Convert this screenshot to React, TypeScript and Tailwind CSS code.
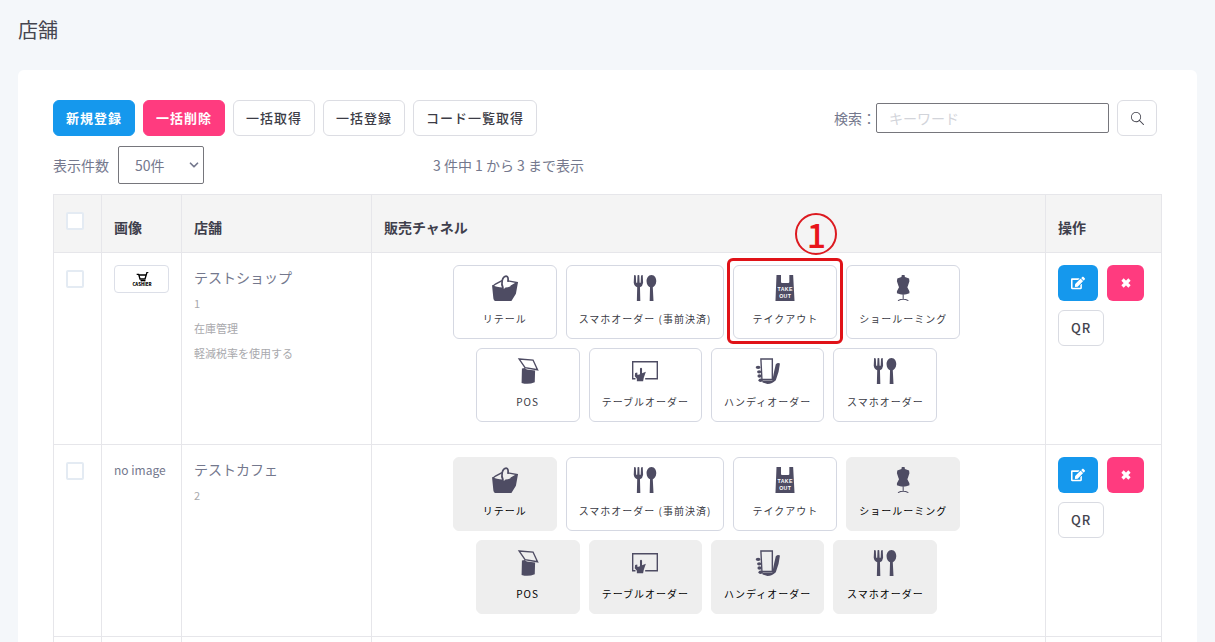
import type { ReactNode } from "react";
import { ChevronDown } from "lucide-react";
import { SlMagnifier } from "react-icons/sl";
import { FaEdit } from "react-icons/fa";

type ChannelIcon =
  | "basket"
  | "cutlery"
  | "bag"
  | "mannequin"
  | "pos"
  | "table"
  | "handy";

interface Channel {
  label: string;
  icon: ChannelIcon;
}

interface Store {
  id: number;
  name: string;
  notes: string[];
  hasLogo: boolean;
  enabled: string[];
  highlighted?: string;
}

const CHANNEL_ROWS: Channel[][] = [
  [
    { label: "リテール", icon: "basket" },
    { label: "スマホオーダー (事前決済)", icon: "cutlery" },
    { label: "テイクアウト", icon: "bag" },
    { label: "ショールーミング", icon: "mannequin" },
  ],
  [
    { label: "POS", icon: "pos" },
    { label: "テーブルオーダー", icon: "table" },
    { label: "ハンディオーダー", icon: "handy" },
    { label: "スマホオーダー", icon: "cutlery" },
  ],
];

const STORES: Store[] = [
  {
    id: 1,
    name: "テストショップ",
    notes: ["在庫管理", "軽減税率を使用する"],
    hasLogo: true,
    enabled: CHANNEL_ROWS.flat().map((c) => c.label),
    highlighted: "テイクアウト",
  },
  {
    id: 2,
    name: "テストカフェ",
    notes: [],
    hasLogo: false,
    enabled: ["スマホオーダー (事前決済)", "テイクアウト"],
  },
];

const ICONS: Record<ChannelIcon, ReactNode> = {
  basket: (
    <>
      <path
        d="M3 32 L10 26 L29 16 M46 17 L72 22 L54 33"
        fill="none"
        stroke="currentColor"
        strokeWidth="4"
      />
      <path
        d="M32 38 C25 26 29 4 41 3 C47 3 47 12 46 20"
        fill="none"
        stroke="currentColor"
        strokeWidth="5"
      />
      <path d="M0 29 C8 34 20 36 31 36 L35 40 L39 36 C46 36 52 34 57 30 L75 21 L69 54 L56 75 L9 75 Q5 74 4 68 Z" />
    </>
  ),
  cutlery: (
    <>
      <path d="M6 1 Q9 -1 11 2 L12 22 Q14 23 15 22 L16 1 Q19 -1 21 1 L22 22 Q24 23 25 22 L26 2 Q29 -1 31 1 L32 22 Q31 32 23 35 L24 75 L14 75 L15 35 Q6 32 5 22 Z" />
      <path d="M56 0 C66 0 70 9 70 18 C70 28 64 33 60 35 L62 75 L51 75 L52 35 C47 33 42 28 42 18 C42 9 47 0 56 0 Z" />
    </>
  ),
  bag: (
    <>
      <path d="M13 0 L26 0 L26 20 Q26 23 29 23 L47 23 Q50 23 50 20 L50 0 L61 0 L65 75 L10 75 Z" />
      <g
        className="font-['Liberation_Sans',sans-serif] font-bold"
        fill="white"
        fontSize="15"
        textAnchor="middle"
      >
        <text x="38" y="47">
          TAKE
        </text>
        <text x="38" y="66">
          OUT
        </text>
      </g>
    </>
  ),
  mannequin: (
    <>
      <path d="M34 0 L42 0 L43 6 L55 10 L56 18 L52 30 L50 35 L56 47 L56 53 Q38 61 20 53 L20 47 L26 35 L24 30 L20 18 L21 10 L33 6 Z" />
      <path
        d="M38 56 L38 69 M23 74 Q38 66 53 74"
        fill="none"
        stroke="currentColor"
        strokeWidth="3"
      />
    </>
  ),
  pos: (
    <>
      <path
        d="M12 3 L52 6 L65 34 L29 28 Z"
        fill="none"
        stroke="currentColor"
        strokeWidth="4"
      />
      <path d="M20 30 L28 29 L34 33 L58 36 L57 70 Q38 78 19 72 Z" />
    </>
  ),
  table: (
    <>
      <path
        d="M10 60 L2 60 L2 11 L73 11 L73 60 L38 60"
        fill="none"
        stroke="currentColor"
        strokeWidth="4"
      />
      <path d="M23 30 Q26 26 29 30 L29 44 L40 40 L34 57 L32 67 L14 67 L14 60 L8 53 L9 43 L15 42 L16 49 L23 47 Z" />
    </>
  ),
  handy: (
    <>
      <path
        d="M17 3 L50 3 L50 62 L20 62 Z"
        fill="none"
        stroke="currentColor"
        strokeWidth="4"
      />
      <ellipse cx="9" cy="27" rx="7" ry="5" />
      <ellipse cx="12" cy="40" rx="6" ry="5" />
      <ellipse cx="13" cy="52" rx="6" ry="5" />
      <ellipse cx="16" cy="64" rx="6" ry="5" />
      <path d="M60 18 Q66 12 72 16 L68 40 L60 64 Q50 74 36 75 L22 71 L20 65 L50 65 L55 40 Z" />
    </>
  ),
};

function ChannelButton({
  channel,
  enabled,
  highlighted,
}: {
  channel: Channel;
  enabled: boolean;
  highlighted: boolean;
}) {
  return (
    <div className="relative mr-1">
      <button
        type="button"
        className={
          enabled
            ? "flex h-[74px] min-w-[104px] flex-col items-center rounded-md border border-[#d5d8e2] bg-white px-3 pt-[9px] text-[10px] tracking-[1px] text-[#3a3a44]"
            : "flex h-[74px] min-w-[104px] flex-col items-center rounded-md border border-[#eeeeee] bg-[#eeeeee] px-3 pt-[9px] text-[10px] tracking-[1px] text-black"
        }
      >
        <svg
          viewBox="0 0 75 75"
          className="size-[26px] text-[#4e4c63]"
          fill="currentColor"
          aria-hidden="true"
        >
          {ICONS[channel.icon]}
        </svg>
        <span className="mt-2 whitespace-nowrap leading-5">
          {channel.label}
        </span>
      </button>
      {highlighted && (
        <>
          <div className="pointer-events-none absolute -inset-x-[6px] -top-[7px] -bottom-[5px] rounded-md border-3 border-[#e01218]" />
          <span className="pointer-events-none absolute -top-[52px] left-[62px] flex size-[42px] items-center justify-center rounded-full border-2 border-[#dc1a20] text-[34px] leading-none font-medium text-[#e8141a]">
            1
          </span>
        </>
      )}
    </div>
  );
}

function ShopLogo() {
  return (
    <div className="flex h-7 w-[55px] items-center justify-center rounded-sm border border-[#dcdfe8] bg-white">
      <svg viewBox="0 0 60 42" className="h-[14px] w-5" aria-hidden="true">
        <path
          d="M14 7 L20 7 L24 21 L39 21 L45 1 L49 0 M19 9 L42 9 M26 26 L40 26"
          fill="none"
          stroke="black"
          strokeWidth="4"
        />
        <circle cx="28" cy="26" r="2" />
        <circle cx="38" cy="26" r="2" />
        <text x="30" y="42" fontSize="13" fontWeight="900" textAnchor="middle">
          CASHIER
        </text>
      </svg>
    </div>
  );
}

function Checkbox({ label }: { label: string }) {
  return (
    <input
      type="checkbox"
      aria-label={label}
      className="block size-[18px] appearance-none rounded-xs border-2 border-[#e4ebf3] bg-white checked:bg-[#1598ed]"
    />
  );
}

function StoreRow({ store }: { store: Store }) {
  return (
    <tr className="align-top">
      <td className="border border-[#e6e6ea] px-3 pt-[17px]">
        <Checkbox label={store.name} />
      </td>
      <td className="border border-[#e6e6ea] px-3 pt-3 text-[12px] leading-[25px]">
        {store.hasLogo ? <ShopLogo /> : "no image"}
      </td>
      <td className="border border-[#e6e6ea] px-3 pt-3">
        <div className="mb-0.5 text-sm leading-6">{store.name}</div>
        <div className="text-[11px] leading-[25px] text-[#a9a9ad]">
          <div>{store.id}</div>
          {store.notes.map((note) => (
            <div key={note}>{note}</div>
          ))}
        </div>
      </td>
      <td className="border border-[#e6e6ea] px-3 pt-3 pb-[22px]">
        <div className="flex flex-col gap-[9px]">
          {CHANNEL_ROWS.map((row, i) => (
            <div key={i} className="flex justify-center gap-[5px]">
              {row.map((channel) => (
                <ChannelButton
                  key={channel.label}
                  channel={channel}
                  enabled={store.enabled.includes(channel.label)}
                  highlighted={store.highlighted === channel.label}
                />
              ))}
            </div>
          ))}
        </div>
      </td>
      <td className="border border-[#e6e6ea] px-3 pt-3">
        <div className="flex flex-wrap gap-[9px]">
          <button
            type="button"
            aria-label="編集"
            className="flex h-9 w-10 items-center justify-center rounded-md bg-[#1598ed] text-white"
          >
            <FaEdit size={14} />
          </button>
          <button
            type="button"
            aria-label="削除"
            className="flex h-9 w-[37px] items-center justify-center rounded-md bg-[#ff3b7f] text-white"
          >
            <svg viewBox="0 0 10 10" className="size-[10px]" aria-hidden="true">
              <path
                d="M1.5 1.5 L8.5 8.5 M8.5 1.5 L1.5 8.5"
                stroke="currentColor"
                strokeWidth="3.2"
              />
            </svg>
          </button>
          <button
            type="button"
            className="h-9 rounded-md border border-[#d9dbe2] bg-white px-3 text-[13px] font-medium tracking-[1px] text-[#44444e]"
          >
            QR
          </button>
        </div>
      </td>
    </tr>
  );
}

export default function App() {
  return (
    <div className="min-h-screen bg-[#f4f7fa] px-[18px] font-['Noto_Sans_CJK_JP',sans-serif] text-sm text-[#74788d]">
      <h1 className="pt-[15px] pb-[25px] text-[20px] leading-[30px] text-[#45454f]">
        店舗
      </h1>

      <main className="rounded-md bg-white px-[35px] pt-[30px] pb-8">
        {/* Toolbar */}
        <div className="flex items-center justify-between pr-[5px]">
          <div className="flex gap-2 text-[13px] tracking-[1px]">
            <button
              type="button"
              className="h-9 rounded-md border border-[#1598ed] bg-[#1598ed] px-3 font-bold text-white"
            >
              新規登録
            </button>
            <button
              type="button"
              className="h-9 rounded-md border border-[#ff3b7f] bg-[#ff3b7f] px-3 font-bold text-white"
            >
              一括削除
            </button>
            {["一括取得", "一括登録", "コード一覧取得"].map((label) => (
              <button
                key={label}
                type="button"
                className="h-9 rounded-md border border-[#dcdde3] bg-white px-3 font-medium text-[#3c3c46]"
              >
                {label}
              </button>
            ))}
          </div>

          <div className="flex items-center">
            <label htmlFor="keyword">検索：</label>
            <input
              id="keyword"
              type="text"
              placeholder="キーワード"
              className="h-[30px] w-[233px] rounded-xs border border-[#76767c] px-3 placeholder:text-[#d2d4da]"
            />
            <button
              type="button"
              aria-label="検索"
              className="ml-2 flex h-9 w-10 items-center justify-center rounded-md border border-[#dcdde3] bg-white text-[#44444e]"
            >
              <SlMagnifier size={13} />
            </button>
          </div>
        </div>

        {/* Page size and result count */}
        <div className="mt-[10px] grid grid-cols-[380px_1fr] items-center">
          <div className="flex items-center gap-[9px]">
            <label htmlFor="page-size">表示件数</label>
            <div className="relative">
              <select
                id="page-size"
                defaultValue="50"
                className="block h-[38px] w-[86px] appearance-none rounded-xs border border-[#76767c] bg-white pl-4"
              >
                <option value="50">50件</option>
                <option value="100">100件</option>
              </select>
              <ChevronDown
                size={14}
                strokeWidth={3}
                className="pointer-events-none absolute top-3 right-[3px]"
              />
            </div>
          </div>
          <p>3 件中 1 から 3 まで表示</p>
        </div>

        {/* Store list */}
        <table className="mt-[10px] w-full table-fixed border-collapse">
          <colgroup>
            <col className="w-12" />
            <col className="w-20" />
            <col className="w-[190px]" />
            <col />
            <col className="w-[116px]" />
          </colgroup>
          <thead className="bg-[#f4f4f4] text-left text-[#3f3f4c]">
            <tr className="h-[58px]">
              <th className="border border-[#e6e6ea] px-3 pt-[17px] align-top">
                <Checkbox label="すべて選択" />
              </th>
              {["画像", "店舗", "販売チャネル", "操作"].map((label) => (
                <th
                  key={label}
                  className="border border-[#e6e6ea] px-3 pt-1.5 font-bold"
                >
                  {label}
                </th>
              ))}
            </tr>
          </thead>
          <tbody>
            {STORES.map((store) => (
              <StoreRow key={store.id} store={store} />
            ))}
            <tr className="h-12">
              {[0, 1, 2, 3, 4].map((i) => (
                <td key={i} className="border border-[#e6e6ea]" />
              ))}
            </tr>
          </tbody>
        </table>
      </main>
    </div>
  );
}
